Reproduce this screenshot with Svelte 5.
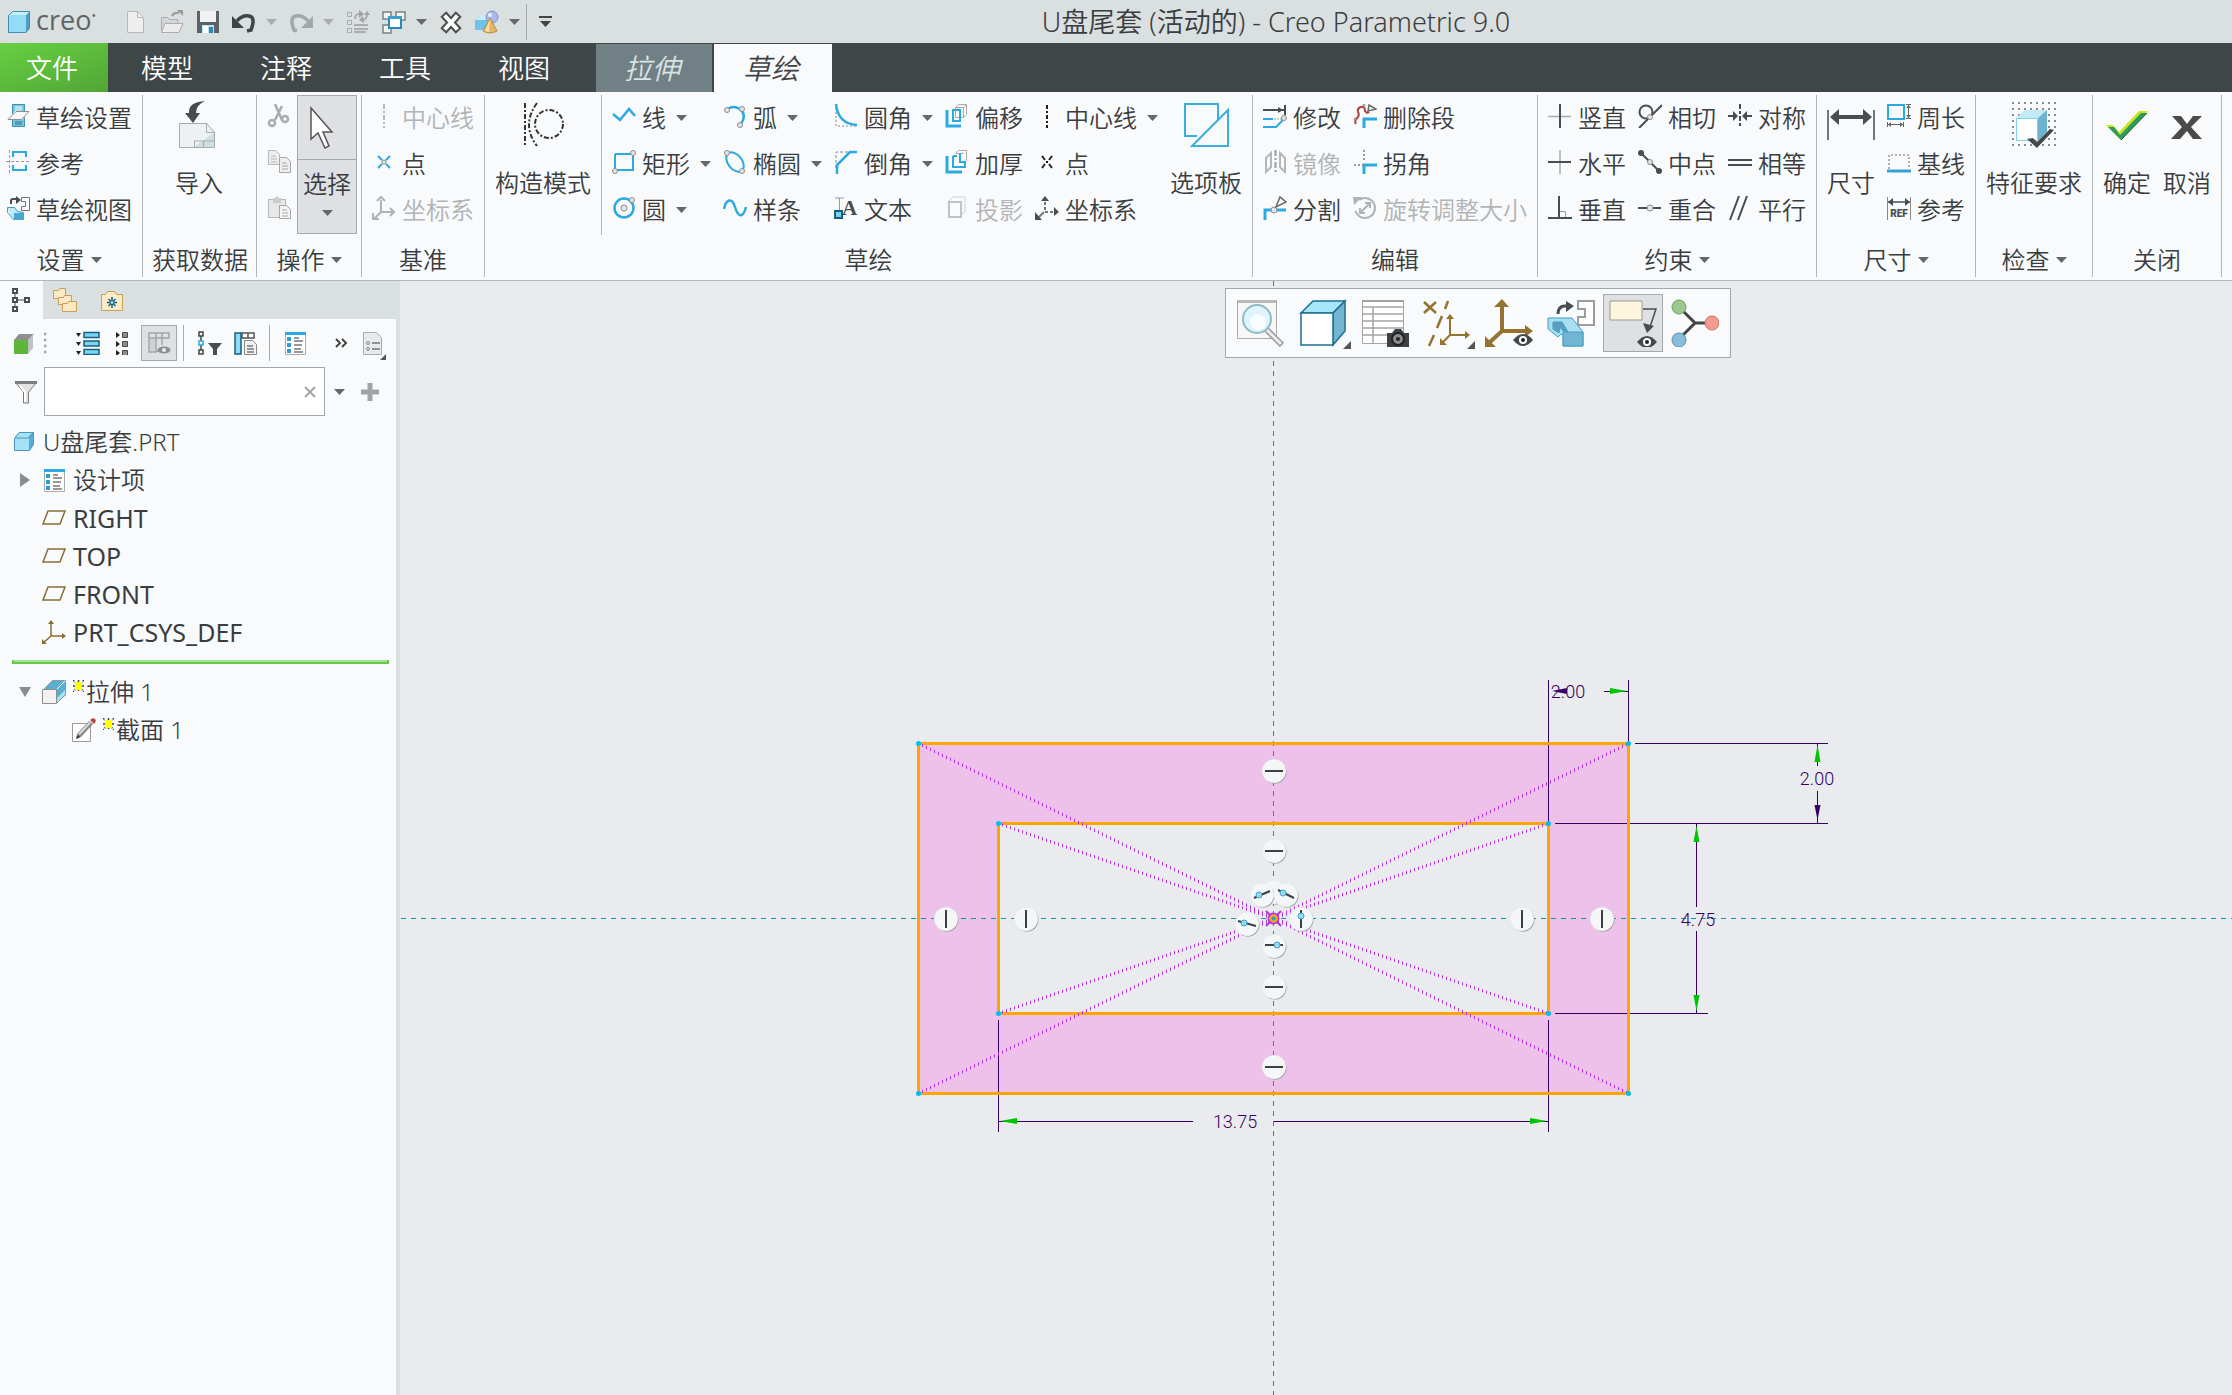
<script lang="ts">
  type Item = { t: string; i: string; menu?: boolean; off?: boolean };
  type Part =
    | { kind: 'col'; items: Item[] }
    | { kind: 'big'; t: string; i: string }
    | { kind: 'clip' }
    | { kind: 'select' }
    | { kind: 'sep' };
  type Group = { label: string; menu?: boolean; cls?: string; parts: Part[] };

  const B = '#2ba9e1';
  const D = '#4a4d4f';
  const G = '#b4b6b7';
  const BR = '#94722f';
  const ball = (x: number, y: number, r = 2.5) =>
    `<circle cx="${x}" cy="${y}" r="${r}" fill="#e4e4e4" stroke="#8d8d8d"/>`;
  const s = (c: string, w: number, d: string, extra = '') =>
    `<path d="${d}" fill="none" stroke="${c}" stroke-width="${w}" ${extra}/>`;
  const f = (c: string, d: string, extra = '') => `<path d="${d}" fill="${c}" ${extra}/>`;

  const small: Record<string, string> = {
    sketchSetup:
      f('#7cc3dc', 'M6 0h13v23H6z') + s('#3f8fae', 1, 'M6.500 .500h12v22h-12z') + f('#b9e2ef', 'M9 2h7v5H9z') +
      f('#4a9cbe', 'M9 17h7v4H9z') + f('#f7f7f7', 'M9 7h15l-8 9H1z') + s('#8b8d8e', 1, 'M10 7.500h13l-7.500 8H2z'),
    refs: s(B, 2, 'M7 7V2h13v5M7 15v5h13v-5') + s('#999', 1, 'M3.500 0v24M0 11.500h23', 'stroke-dasharray="3 2"'),
    sketchView:
      s(D, 2, 'M5 8V5q0-2 2-2h4') + f(D, 'M10 0l5 4-5 4z') + s('#777', 1, 'M15.500 1.500h8v13h-8v-4h4v-5h-4z') +
      f('#bfe9f6', 'M1 11h8l3 4 6 1v8H7z') + s('#3f9cc4', 1, 'M1.500 11.500h7l3 4 6 1v7H7.500l-6-7z') + f('#4aa7cd', 'M8 17h10v7H8z'),
    cut: s('#a9abac', 2.500, 'M8 0l7 16M15 2L8 16') + `<circle cx="5" cy="19" r="3" fill="none" stroke="#a9abac" stroke-width="2.500"/><circle cx="18" cy="15" r="3" fill="none" stroke="#a9abac" stroke-width="2.500"/>`,
    copy: f('#eee', 'M1 0h8l4 4v11H1z') + s(G, 1, 'M1.500 .500h7l4 4v10h-11zM4 6h5M4 9h6M4 12h6') + f('#eee', 'M12 7h8l4 4v12H12z') + s('#a5a7a8', 1, 'M12.500 7.500h7l4 4v11h-11zM15 13h5M15 16h6M15 19h6'),
    paste: f('#e8e8e8', 'M1 3h18v19H1z') + s(G, 1, 'M1.500 3.500h17v18h-17z') + f('#c9cbcc', 'M6 2h2l2-2 2 2h2v5H6z') + f('#f4f4f4', 'M12 9h8l4 4v10H12z') + s('#a5a7a8', 1, 'M12.500 9.500h7l4 4v9h-11zM15 14h5M15 17h6M15 20h6'),
    clOff: s('#b8babb', 2, 'M12 0v24', 'stroke-dasharray="5 2 2 2"'),
    cl: s('#222', 2, 'M12 1v24', 'stroke-dasharray="4 2 2 2"'),
    ptBlue: s(B, 2, 'M6 6l4 4M18 6l-4 4M6 18l4-4M18 18l-4-4') + ball(12, 12, 2),
    ptBlack: s('#222', 2, 'M7 6l3 4M17 6l-3 4M7 18l3-4M17 18l-3-4') + f('#111', 'M11 11h2v2h-2z'),
    csysOff: s('#b0b2b3', 2, 'M9 4v12h12M9 16l-7 7') + s('#b0b2b3', 2, 'M5 5l4-4 4 4M18 12l4 4-4 4M1 17v6h6'),
    csys: s('#777', 2, 'M10 6v10h8', 'stroke-dasharray="3 2"') + s('#777', 2, 'M9 16l-5 5') + f(D, 'M6 5l4-5 4 5zM19 11v9l5-4zM0 16v8h7z'),
    line: s(B, 2.5, 'M1 10l7 6 9-11 6 7'),
    rect: s(B, 2, 'M3 4v16h18V4H3') + ball(21, 3) + ball(3, 21),
    circle: `<circle cx="12" cy="12" r="9.500" fill="none" stroke="${B}" stroke-width="2.500"/>` + ball(12, 12, 3) + ball(20, 4),
    arc: s(B, 2.5, 'M5 5Q10 1 17 5Q24 11 18 20') + ball(4, 6) + ball(19, 5) + ball(17, 21),
    ellipse: `<ellipse cx="12" cy="12" rx="11" ry="7" transform="rotate(52 12 12)" fill="none" stroke="${B}" stroke-width="2"/>` + ball(4, 3) + ball(19, 21),
    spline: s(B, 2.5, 'M1 13C3 3 9 1 12 11S20 23 23 11'),
    fillet: s('#888', 1, 'M2 4v18h20', 'stroke-dasharray="2 2"') + s(B, 2.5, 'M2 0Q4 20 23 21'),
    chamfer: s('#888', 1, 'M2 18V2h14', 'stroke-dasharray="3 2"') + s(B, 2.5, 'M3 24V15L16 2h7'),
    text: s('#999', 1, 'M1 2h9M5.500 2v12') + f('#14607f', 'M0 14h9v9H0z') + f('#7fd0ee', 'M2 16h5v5H2z') + `<text x="8" y="19" font-family="Liberation Serif, serif" font-weight="700" font-size="21" fill="${D}">A</text>`,
    offset: s('#aaa', 1, 'M10.500 3.500l3-3h8v10l-3 3h-8zM10.500 3.500h8v10M18.500 3.500l3-3') + s(B, 2, 'M8 6h7v11H8z') + s(B, 3, 'M2 6v16h14'),
    thicken: s('#aaa', 1, 'M10.500 3.500l3-3h8v10l-3 3M10.500 3.500h8') + s(B, 2, 'M8 6v11h12v-5h-5V3M8 6h4') + s(B, 3, 'M2 6v16h15'),
    project: s('#c0c2c3', 2, 'M4 6h12v15H4z') + s('#cdcfd0', 1, 'M4 5l4-4h12v14l-4 5'),
    modify: s(D, 2, 'M0 6h22M22 1v10') + f(D, 'M15 3l5 3-5 3z') + s(B, 2, 'M0 15h10M0 23h13l7-7') + s('#999', 1, 'M11 15h9', 'stroke-dasharray="2 1"') + ball(21, 14),
    mirror: s('#b4b6b7', 2, 'M3 8l5-5v14l-5 5zM22 8l-5-5v14l5 5z') + s('#999', 2, 'M12.500 0v24', 'stroke-dasharray="6 2 2 2"'),
    split: s(B, 3, 'M2 24V14h8M12 14h11') + ball(11, 14, 3) + s('#666', 1.5, 'M13 11l4-10 6 5z'),
    delSeg: s('#b0413f', 2, 'M3 20q-2-3 1-6t1-6q-1-4 3-5t4 4q2 3 4 1') + s('#666', 1.5, 'M15 7l1-6 7 4z') + s(B, 3, 'M24 15H11v9') + ball(2, 15, 1) + ball(11, 1, 1),
    corner: s(B, 3, 'M24 15H11v9') + s('#999', 2, 'M11 0v12M1 15h9', 'stroke-dasharray="2 2"'),
    rotate: `<circle cx="12" cy="12" r="10" fill="none" stroke="#b0b2b3" stroke-width="2" stroke-dasharray="50 13" transform="rotate(-125 12 12)"/>` + s('#b0b2b3', 2, 'M7 17L17 7M12 7h5v5M7 12v5h5') + f('#b0b2b3', 'M0 1h9l-8 8z'),
    vert: s('#aaa', 1.5, 'M0 12.500h23') + s(D, 2, 'M12 0v24'),
    horiz: s('#aaa', 1.500, 'M12 0v24') + s(D, 2, 'M0 12h23'),
    perp: s(D, 2, 'M11 0v22M0 22h24') + s('#999', 1, 'M12 15.500h5.500V21'),
    tangent: `<circle cx="8" cy="8" r="6.500" fill="none" stroke="${D}" stroke-width="2"/>` + s(D, 2, 'M1 24L24 1') + ball(12, 13, 2.5),
    midpoint: s(D, 2, 'M3 3l18 18') + `<circle cx="3" cy="3" r="3" fill="${D}"/><circle cx="21" cy="21" r="3" fill="${D}"/>` + ball(12, 12),
    coincident: s(D, 2, 'M0 12h23') + ball(12, 12, 3),
    symmetric: s(D, 2, 'M12 0v24', 'stroke-dasharray="5 2 3 2"') + s(D, 2, 'M0 12h7M24 12h-7') + f(D, 'M5 7l5 5-5 5zM19 7l-5 5 5 5z'),
    equal: s(D, 2, 'M0 10h24M0 15h24'),
    parallel: s(D, 2, 'M2 24L11 0M10 24L19 0'),
    perimeter: s(B, 2, 'M1 1h16v14H1z') + s('#666', 1, 'M19 .500h5M19 14.500h5M21.500 1v13M.500 18v5M16.500 18v5M1 20.500h15') + f('#666', 'M19 4l2.500-3L24 4zM19 11l2.500 3 2.500-3zM4 18l-3 2.500L4 23zM13 18l3 2.500-3 2.500z'),
    baseline: s('#999', 1.500, 'M2 19V5h20v14', 'stroke-dasharray="2 2"') + s('#3aa2d2', 3, 'M0 21h24'),
    refdim: s('#888', 1, 'M.500 1v23M23.500 1v23') + s(D, 1.500, 'M1 6h22') + f(D, 'M6 2L1 6l5 4zM18 2l5 4-5 4z') + `<text x="12" y="21" text-anchor="middle" font-family="Roboto, sans-serif" font-weight="900" font-size="10" fill="${D}">REF</text>`,
    new: f('#eee', 'M3 1h11l6 6v16H3z') + s('#b5b7b8', 1, 'M3.500 1.500h10l6 6v15h-16zM13.500 1.500v6h6'),
    open: f('#d4d6d7', 'M1 7h7l2 2h10v13H1z') + f('#ebebeb', 'M5 13h18l-4 9H1z') + s('#aaacad', 1, 'M1.500 21V7.500h6l2 2h8V13M5 13.500h18l-4 9H1.500z') + s('#999', 2, 'M12 6q2-4 7-3') + f('#999', 'M17 0h6v6z'),
    save: f('#5a6468', 'M1 1h22v22H1z') + f('#f2f2f2', 'M4 1h16v11H4z') + f('#bde3f2', 'M6 15h12v8H6z') + f('#fff', 'M7 16h5v7H7z') + f('#2f89b5', 'M13 17h4v6h-4z'),
    undo: s('#3f4547', 3.5, 'M5 11Q10 5 17 6T19 20L15 21') + f('#3f4547', 'M0 6v12h12z'),
    redo: s('#a3a8a9', 3.500, 'M19 11Q14 5 7 6T5 20l3 1') + f('#a3a8a9', 'M24 6v12H12z'),
    regen: s('#aaadae', 1, 'M1.500 2.500h4v4h-4zM1.500 10.500h4v4h-4zM1.500 18.500h4v4h-4z') + s('#aaadae', 2, 'M8 15h14M8 19h14M8 22h12M9 9Q9 4 13 4M21 4q0 6-5 6') + f('#9fa2a3', 'M13 0l5 4-5 4zM17 6l-4 4 5 3zM18 5l3-4 3 4z'),
    windows: `<g fill="#f2f4f4" stroke="#7b8081" stroke-width="1.500"><path d="M1 2h8v7H1zM14 2h9v8h-9zM1 15h8v8H1z"/></g>` + `<path d="M7 7h12v11H7z" fill="#fff" stroke="#2b87b5" stroke-width="2"/>` + f('#3ba0cc', 'M6 6h14v3H6z'),
    close: s('#4d4f50', 8, 'M7 7l10 11M17 7L7 18', 'stroke-linecap="square"') + s('#fff', 4, 'M7 7l10 11M17 7L7 18', 'stroke-linecap="square"'),
    shapes: f('#6cc5e8', 'M0 10l5-4h10v10l-3 4H0z') + f('#c9ecf8', 'M0 10l5-4h10l-3 4z') + `<circle cx="17" cy="7" r="6" fill="#a9b9ea" stroke="#7f90cd"/><circle cx="15" cy="5" r="2" fill="#e6ecff"/>` + `<path d="M15 8l7 13q-7 4-14 0z" fill="#e2b865" stroke="#b58a3a"/>` + f('#f6dfae', 'M15 9l-1 13-4-1z'),
    tree: s(D, 2, 'M2 1h4v4H2zM2 10h4v4H2zM2 19h4v4H2zM14 10h4v4h-4z') + s(D, 1, 'M4 6v3M4 15v3M7 12h6'),
    folders: `<g fill="#fbe9c4" stroke="#c79f55"><path d="M.500 2.500h5l1-2h6v10h-12z"/><path d="M5.500 9.500h5l1-2h7v9h-13z"/><path d="M9.500 15.500h5l1-2h8v10h-14z"/></g>`,
    favorites: `<path d="M1.500 6.500h4l2-3h7l2 3h6v16h-21z" fill="#fdebc6" stroke="#c79f55"/>` + s('#14607f', 1.500, 'M12 9v11M7 14.500h10M8.500 11l7 7M15.500 11l-7 7') + `<circle cx="12" cy="14.500" r="2" fill="#9bdcf5" stroke="#14607f"/>`,
    green: f('#8d8f90', 'M1 9l5-6h15l-5 6z') + f('#bfc1c2', 'M15 9l5-6v14l-5 6z') + f('#5cb739', 'M1 9h14v14H1z'),
    expand: f('#222', 'M0 2h5l-2.500 4zM0 11h5l-2.500 4zM0 20h5l-2.500 4z') + `<g fill="#7dd5f5" stroke="#14607f" stroke-width="1.500"><path d="M8 1.500h15v5H8zM8 10h15v5H8zM8 18.500h15v5H8z"/></g>`,
    collapse: f('#222', 'M4 1l4 3-4 3zM4 10l4 3-4 3zM4 19l4 3-4 3z') + `<g fill="#8a8c8d" stroke="#4a4a4a"><path d="M10.500 1.500h5v5h-5zM10.500 10.500h5v5h-5zM10.500 19.500h5v5h-5z"/></g>`,
    columns: s('#a2a4a5', 1.500, 'M2 2h20v5H2zM2 7v14h7V7M9 2v5M15 2v12M9 20h3') + f('#cfd0d1', 'M3 8h5v12H3z') + `<ellipse cx="17" cy="19" rx="6.500" ry="3.500" fill="#8c8e8f"/><circle cx="17" cy="19" r="2" fill="#eee"/>`,
    treeFilter: s('#444', 1.500, 'M1 1h4v4H1zM1 19h4v4H1zM3 5v14') + `<path d="M1 10h4v4H1z" fill="#fff" stroke="${B}" stroke-width="1.500"/>` + f('#4a4d4f', 'M10 12h14l-5 6v6h-4v-6z'),
    treeCols: f('#fff', 'M1 1h20v6H1z') + s('#555', 1.500, 'M8 2h12v5H8zM14 2v5') + `<path d="M1 2h6v21H1z" fill="#8fdcf7" stroke="#14607f" stroke-width="1.500"/>` + `<path d="M10.500 9.500h8l4 4v10h-12z" fill="#f3f3f3" stroke="#888"/>` + s('#777', 1.500, 'M13 15h6M13 18h7M13 21h7'),
    list: `<path d="M2.500 1.500h20v22h-20z" fill="#fff" stroke="#a9abac"/>` + f(B, 'M2 1h21v3H2z') + s('#2ba0d0', 2, 'M5 7h2v2H5zM5 13h2v2H5zM5 19h2v2H5z') + s('#777', 1.500, 'M11 7h5M11 10h9M11 14h8M11 18h7M11 21h9'),
    doc: `<path d="M1.500 1.500h13l5 5v17h-18z" fill="#e6eaed" stroke="#a9abac"/>` + s('#777', 1.500, 'M10 12h8M10 18h8') + `<circle cx="6" cy="12" r="1.500" fill="none" stroke="#888"/><circle cx="6" cy="18" r="1.500" fill="none" stroke="#888"/>`,
    funnel: `<path d="M1 2h22l-8.500 10v11h-5V12z" fill="#e3e3e3" stroke="#77797a"/>` + f('#7c7e7f', 'M1 1h22v3H1z') + s('#fff', 2, 'M6 6l5 6v10'),
    part: f('#a6e2f7', 'M3 6l4-4h14v13l-4 6H3z') + f('#5aaed2', 'M17 6l4-4v13l-4 6z') + s('#4a96b8', 1, 'M2.500 8.500l5-6h14v12l-4 6h-15zM2.500 8h14l5-5.500'),
    plane: s('#8a6d33', 1.500, 'M6 5h17l-5 13H1z'),
    csysTree: s('#8a6d33', 1.500, 'M9 2v14h14M9 16l-8 7') + f('#8a6d33', 'M6 4l3-4 3 4zM20 13v6l4-3zM0 19v5h5z'),
    extrude: f('#5aaed2', 'M1 10l9-9h14v14l-9 8z') + f('#a6e2f7', 'M15 18l8-8v5l-8 8z') + s('#8b9ba3', 1, 'M1.500 9.500l9-9h13v14l-8.500 8.500') + `<path d="M.500 9.500h14v14H.500z" fill="#f2f2f2" stroke="#8d8f90"/>` + s('#fff', 1, 'M15 9l8-8'),
    section: `<path d="M.500 5.500h18v18H.500z" fill="#fff" stroke="#999"/>` + f('#888', 'M17 3l4 3L9 19l-5 2 1-5z') + f('#d9d9d9', 'M17 4l2 1L8 17l-2-1z') + f('#333', 'M6 17l2 2-4 2z') + f('#b34a4a', 'M18 2q3-3 5-1t-1 5z'),
  };

  const eye = (x: number, y: number) =>
    f('#45494b', `M${x - 10} ${y}q10-12 20 0q-10 12-20 0z`) + `<circle cx="${x}" cy="${y}" r="4" fill="#fff"/><circle cx="${x}" cy="${y}" r="2" fill="#222"/>`;

  const large: Record<string, string> = {
    import: f('#eef1f3', 'M4 22h28l8 9v16H4z') + f('#cfdde5', 'M19 46L40 31v15z') + s('#a9abac', 1, 'M4.500 22.500h27l8 9v15h-35zM31.500 22.500v9h8') + s('#a9abac', 1, 'M19.500 46v-6h20M28.500 40v6') + f('#474b4d', 'M30 0Q13 1 14 12h-4l8 10 7-10h-4Q21 4 30 0z'),
    construct: s('#333', 2, 'M6 2v44', 'stroke-dasharray="5 2 2 2"') + s('#333', 2, 'M18 2Q2 24 18 45', 'stroke-dasharray="5 2 2 2"') + `<circle cx="30" cy="23" r="14" fill="none" stroke="#333" stroke-width="2" stroke-dasharray="5 2 2 2"/>`,
    palette: s('#3aaee0', 2, 'M46 9v36H10zM15 35H3V3h33v16'),
    dim: s(D, 1.500, 'M1 9v30M47 9v30') + s(D, 4, 'M10 16h28') + f(D, 'M3 16l9-8v16zM45 16l-9-8v16z'),
    feature: `<g stroke="#8a8c8d" stroke-width="2" stroke-dasharray="2 4"><path d="M2 2h44M2 8h44M2 14h44M2 20h44M2 26h44M2 32h44M2 38h44M2 44h44"/></g>` + f('#c3ebf7', 'M6 17l9-8h22l-9 8z') + f('#6cb3d0', 'M28 17l9-8v22l-9 9z') + `<path d="M6.500 17.500h21v22h-21z" fill="#fff" stroke="#7ed0ee"/>` + f('#45494b', 'M17 38l6-1 4 4 13-13 4 1-17 18z'),
    ok: f('#c9e61c', 'M3 24h7l6 7L36 10h9L18 39z') + f('#2f9a5e', 'M5 26h6l6 8L38 12h6L18 39z') + s('#1f5f38', 1, 'M44 12L18 39'),
    cancel: f('#4a4a4a', 'M9 15h9l6 8 6-8h9L28 26l11 12h-9l-6-8-7 8H8l11-12z'),
    pointer: f('#fff', 'M7 4v31l7-6 7 15 4-2-6-14h9z') + s('#555', 1.500, 'M7 4v31l7-6 7 15 4-2-6-14h9z'),
    zoomfit: `<path d="M.500 1.500h39v38h-39z" fill="#f7f7f7" stroke="#aaa"/>` + f('#b8baba', 'M1 1h38v3H1z') + s('#9a9c9d', 6, 'M28 29l17 17') + s('#eee', 3, 'M28 29l16 16') + `<circle cx="20" cy="20" r="14" fill="#dff4fc" stroke="#8fb9c9" stroke-width="2"/><circle cx="21" cy="23" r="8" fill="#f8feff"/>`,
    cube: `<g stroke="#1f6f90" stroke-width="1.500"><path d="M2 14L14 2h32L34 14z" fill="#a5e6fa"/><path d="M34 14L46 2v30L34 46z" fill="#72b5d2"/><path d="M2 14h32v32H2z" fill="#fff"/></g>`,
    table: `<path d="M1.500 1.500h41v43h-41z" fill="#fff" stroke="#a2a4a5"/>` + f('#a2a4a5', 'M1 1h42v2H1z') + s('#a2a4a5', 1.500, 'M1 8h42M1 15h42M1 22h42M1 29h42M1 36h42M12 8v36') + f('#3f4244', 'M26 34h5l3-4h6l3 4h5v14H26z') + `<circle cx="37" cy="40" r="6" fill="#8a8c8d" stroke="#222" stroke-width="2"/><circle cx="37" cy="40" r="2" fill="#222"/>`,
    datum: s(BR, 2.500, 'M1 3l12 11M13 3L1 14M25 2l-3 8M19 17l-5 12M11 36L6 47') + s(BR, 2, 'M27 20v16h16M27 36l-8 8') + f(BR, 'M23 20l4-5 4 5zM42 32v8l5-4zM17 39v7h7z'),
    csysView: s(BR, 4, 'M17 6v26h26M17 32L5 43') + f(BR, 'M9 8l8-8 7 8zM40 26v12l8-6zM0 37v11h11z') + eye(38, 41),
    orient: s(D, 3, 'M11 15q0-8 7-8h2') + f(D, 'M19 2l8 5-8 6z') + `<path d="M31 2h16v24H31v-8h7v-8h-7z" fill="#fff" stroke="#9a9c9d" stroke-width="2"/>` + `<g stroke="#3fa0c9"><path d="M1 19h24l11 14v14H16V36l-2-1-3 3-10-8z" fill="#a9def0"/><path d="M16 33h20v14H16z" fill="#72b5d2"/><path d="M6 23h9l6 10-5-1-3-4-1 6-6-4z" fill="#5a9fbd"/></g>`,
    annot: `<path d="M1 2h32v19H1z" fill="#fdf6dc" stroke="#999"/>` + s(D, 1.500, 'M34 10h13l-6 18') + f(D, 'M34 24l11 3-7 7z') + eye(38, 43),
    nodes: s('#444', 3, 'M8 8l16 16L8 40M24 24h14') + `<circle cx="8" cy="8" r="7" fill="#9cc98b" stroke="#6f9f61"/><circle cx="8" cy="41" r="7" fill="#89bcd8" stroke="#5d93b1"/><circle cx="41" cy="24" r="7" fill="#f59a90" stroke="#d17066"/>`,
  };

  const col = (...items: Item[]): Part => ({ kind: 'col', items });
  const groups: Group[] = [
    { label: '设置', menu: true, cls: 'first', parts: [col({ t: '草绘设置', i: 'sketchSetup' }, { t: '参考', i: 'refs' }, { t: '草绘视图', i: 'sketchView' })] },
    { label: '获取数据', cls: 'data', parts: [{ kind: 'big', t: '导入', i: 'import' }] },
    { label: '操作', menu: true, cls: 'ops', parts: [{ kind: 'clip' }, { kind: 'select' }] },
    { label: '基准', parts: [col({ t: '中心线', i: 'clOff', off: true }, { t: '点', i: 'ptBlue' }, { t: '坐标系', i: 'csysOff', off: true })] },
    {
      label: '草绘',
      parts: [
        { kind: 'big', t: '构造模式', i: 'construct' },
        { kind: 'sep' },
        col({ t: '线', i: 'line', menu: true }, { t: '矩形', i: 'rect', menu: true }, { t: '圆', i: 'circle', menu: true }),
        col({ t: '弧', i: 'arc', menu: true }, { t: '椭圆', i: 'ellipse', menu: true }, { t: '样条', i: 'spline' }),
        col({ t: '圆角', i: 'fillet', menu: true }, { t: '倒角', i: 'chamfer', menu: true }, { t: '文本', i: 'text' }),
        col({ t: '偏移', i: 'offset' }, { t: '加厚', i: 'thicken' }, { t: '投影', i: 'project', off: true }),
        col({ t: '中心线', i: 'cl', menu: true }, { t: '点', i: 'ptBlack' }, { t: '坐标系', i: 'csys' }),
        { kind: 'big', t: '选项板', i: 'palette' },
      ],
    },
    {
      label: '编辑',
      parts: [
        col({ t: '修改', i: 'modify' }, { t: '镜像', i: 'mirror', off: true }, { t: '分割', i: 'split' }),
        col({ t: '删除段', i: 'delSeg' }, { t: '拐角', i: 'corner' }, { t: '旋转调整大小', i: 'rotate', off: true }),
      ],
    },
    {
      label: '约束', menu: true,
      parts: [
        col({ t: '竖直', i: 'vert' }, { t: '水平', i: 'horiz' }, { t: '垂直', i: 'perp' }),
        col({ t: '相切', i: 'tangent' }, { t: '中点', i: 'midpoint' }, { t: '重合', i: 'coincident' }),
        col({ t: '对称', i: 'symmetric' }, { t: '相等', i: 'equal' }, { t: '平行', i: 'parallel' }),
      ],
    },
    {
      label: '尺寸', menu: true,
      parts: [{ kind: 'big', t: '尺寸', i: 'dim' }, col({ t: '周长', i: 'perimeter' }, { t: '基线', i: 'baseline' }, { t: '参考', i: 'refdim' })],
    },
    { label: '检查', menu: true, parts: [{ kind: 'big', t: '特征要求', i: 'feature' }] },
    { label: '关闭', parts: [{ kind: 'big', t: '确定', i: 'ok' }, { kind: 'big', t: '取消', i: 'cancel' }] },
  ];

  const viewTools = [
    { i: 'zoomfit', t: '重新调整' },
    { i: 'cube', t: '显示样式', more: true },
    { i: 'table', t: '视图管理器' },
    { i: 'datum', t: '基准显示过滤器', more: true },
    { i: 'csysView', t: '坐标系显示' },
    { i: 'orient', t: '草绘视图' },
    { i: 'annot', t: '注释显示', on: true },
    { i: 'nodes', t: '旋转中心' },
  ];

  const C = { x: 1273.5, y: 918.5 };
  const corners = [
    [918.5, 743.5], [1628.5, 743.5], [1628.5, 1093.5], [918.5, 1093.5],
    [998.5, 823.5], [1548.5, 823.5], [1548.5, 1013.5], [998.5, 1013.5],
  ];
  const badges = [
    { x: 1274, y: 771, l: [-9, 0, 9, 0] },
    { x: 1274, y: 851, l: [-9, 0, 9, 0] },
    { x: 1274, y: 987, l: [-9, 0, 9, 0] },
    { x: 1274, y: 1067, l: [-9, 0, 9, 0] },
    { x: 946, y: 919, l: [0, -9, 0, 9] },
    { x: 1026, y: 919, l: [0, -9, 0, 9] },
    { x: 1522, y: 919, l: [0, -9, 0, 9] },
    { x: 1602, y: 919, l: [0, -9, 0, 9] },
    { x: 1274, y: 892, l: [2, -1, 6, -6] },
    { x: 1262, y: 895, l: [-8, 3, 8, -4], p: [-3, 0] },
    { x: 1286, y: 895, l: [-8, -5, 8, 3], p: [-3, -2] },
    { x: 1247, y: 924, l: [-9, -3, 9, 2], p: [-3, -1] },
    { x: 1301, y: 919, l: [0, -9, 0, 9], p: [0, -3] },
    { x: 1274, y: 946, l: [-9, -1, 9, -1], p: [3, -1] },
  ];
</script>

{#snippet ic(name: string)}
  <svg class="ic" viewBox="0 0 24 24" aria-hidden="true">{@html small[name]}</svg>
{/snippet}
{#snippet lg(name: string)}
  <svg class="lg" viewBox="0 0 48 48" aria-hidden="true">{@html large[name]}</svg>
{/snippet}
{#snippet caret()}
  <svg class="caret" viewBox="0 0 11 6" aria-hidden="true"><path d="M0 0h11L5.500 6z" fill="currentColor" /></svg>
{/snippet}
{#snippet star()}
  <svg class="star" viewBox="0 0 11 12" aria-hidden="true">
    <path d="M0 0l11 12M11 0L0 12M5.500 0v12M0 6h11" stroke="#444" stroke-width="1.500" stroke-dasharray="2 1" />
    <path d="M2 2h7v8H2z" fill="#ff0" />
  </svg>
{/snippet}

<div class="app">
  <header class="title">
    <div class="brand">
      <svg class="ic" viewBox="0 0 24 24" aria-hidden="true">
        <path d="M1 5l4-4h18v17l-4 5H1z" fill="#93dcf5" /><path d="M19 5l4-4v17l-4 5z" fill="#4d9fc4" />
        <path d="M1 5l4-4h18l-4 4z" fill="#c9f1fd" /><path d="M1.500 5.500l4-4h17v16.500l-4 4.500h-17z" fill="none" stroke="#3f8fb3" />
      </svg>
      <span>creo<sup>•</sup></span>
    </div>
    <nav class="quick" aria-label="快速访问">
      <button aria-label="新建">{@render ic('new')}</button>
      <button aria-label="打开">{@render ic('open')}</button>
      <button aria-label="保存">{@render ic('save')}</button>
      <button aria-label="撤销">{@render ic('undo')}<span class="pale">{@render caret()}</span></button>
      <button aria-label="重做">{@render ic('redo')}<span class="pale">{@render caret()}</span></button>
      <button aria-label="重新生成">{@render ic('regen')}</button>
      <button aria-label="窗口">{@render ic('windows')}{@render caret()}</button>
      <button aria-label="关闭窗口">{@render ic('close')}</button>
      <button aria-label="外观">{@render ic('shapes')}{@render caret()}</button>
      <i class="rule"></i>
      <button aria-label="自定义">
        <svg class="more" viewBox="0 0 13 12" aria-hidden="true"><path d="M0 0h13v2H0zM1 5h11l-5.500 6z" fill="#444" /></svg>
      </button>
    </nav>
    <h1>U盘尾套 (活动的) - Creo Parametric 9.0</h1>
  </header>

  <nav class="tabs" aria-label="选项卡">
    <button class="file">文件</button>
    {#each ['模型', '注释', '工具', '视图'] as t}<button>{t}</button>{/each}
    <button class="context">拉伸</button>
    <button class="active">草绘</button>
  </nav>

  <section class="ribbon">
    {#each groups as g}
      <div class="group {g.cls ?? ''}">
        <div class="body">
          {#each g.parts as p}
            {#if p.kind === 'col'}
              <div class="col">
                {#each p.items as it}
                  <button class="item" disabled={it.off}>
                    {@render ic(it.i)}<span>{it.t}</span>{#if it.menu}{@render caret()}{/if}
                  </button>
                {/each}
              </div>
            {:else if p.kind === 'big'}
              <button class="big">{@render lg(p.i)}<span>{p.t}</span></button>
            {:else if p.kind === 'clip'}
              <div class="col">
                <button class="item" aria-label="剪切" disabled>{@render ic('cut')}</button>
                <button class="item" aria-label="复制" disabled>{@render ic('copy')}</button>
                <button class="item" aria-label="粘贴" disabled>{@render ic('paste')}</button>
              </div>
            {:else if p.kind === 'select'}
              <div class="select">
                <button aria-label="选择工具">{@render lg('pointer')}</button>
                <button><span>选择</span>{@render caret()}</button>
              </div>
            {:else}
              <i class="part"></i>
            {/if}
          {/each}
        </div>
        <div class="label">{g.label}{#if g.menu}{@render caret()}{/if}</div>
      </div>
    {/each}
  </section>

  <main>
    <aside>
      <nav class="ptabs" aria-label="导航器">
        <button class="on" aria-label="模型树">{@render ic('tree')}</button>
        <button aria-label="文件夹浏览器">{@render ic('folders')}</button>
        <button aria-label="收藏夹">{@render ic('favorites')}</button>
      </nav>
      <div class="ptools">
        <button aria-label="模型">{@render ic('green')}</button>
        <i class="grip"></i>
        <button aria-label="全部展开">{@render ic('expand')}</button>
        <button aria-label="全部折叠">{@render ic('collapse')}</button>
        <button class="pressed" aria-label="显示列">{@render ic('columns')}</button>
        <i class="rule"></i>
        <button aria-label="树过滤器">{@render ic('treeFilter')}</button>
        <button aria-label="树列">{@render ic('treeCols')}</button>
        <i class="rule wide"></i>
        <button aria-label="设计项">{@render ic('list')}</button>
        <button class="chev" aria-label="更多">
          <svg viewBox="0 0 13 10" aria-hidden="true"><path d="M1 1l4 4-4 4M7 1l4 4-4 4" fill="none" stroke="#444" stroke-width="2" /></svg>
        </button>
        <button class="has-more" aria-label="设置">{@render ic('doc')}</button>
      </div>
      <div class="search">
        {@render ic('funnel')}
        <div class="field">
          <input type="text" aria-label="搜索模型树" />
          <button aria-label="清除">
            <svg viewBox="0 0 12 12" aria-hidden="true"><path d="M1 1l10 10M11 1L1 11" stroke="#a3a5a6" stroke-width="2" /></svg>
          </button>
        </div>
        <button aria-label="搜索选项">{@render caret()}</button>
        <button aria-label="添加">
          <svg class="plus" viewBox="0 0 18 18" aria-hidden="true"><path d="M9 0v18M0 9h18" stroke="#a0a2a3" stroke-width="5" /></svg>
        </button>
      </div>
      <ul class="tree">
        <li class="l0">{@render ic('part')}<span>U盘尾套.PRT</span></li>
        <li class="l1"><svg class="tw" viewBox="0 0 12 14" aria-hidden="true"><path d="M1 0l10 7L1 14z" fill="#8a8c8d" /></svg>{@render ic('list')}<span>设计项</span></li>
        {#each ['RIGHT', 'TOP', 'FRONT'] as n}
          <li class="l1 latin"><i class="tw"></i>{@render ic('plane')}<span>{n}</span></li>
        {/each}
        <li class="l1 latin"><i class="tw"></i>{@render ic('csysTree')}<span>PRT_CSYS_DEF</span></li>
      </ul>
      <div class="insert"></div>
      <ul class="tree">
        <li class="l1"><svg class="tw" viewBox="0 0 12 14" aria-hidden="true"><path d="M0 2h12L6 12z" fill="#8a8c8d" /></svg>{@render ic('extrude')}<span>{@render star()}拉伸 1</span></li>
        <li class="l2">{@render ic('section')}<span>{@render star()}截面 1</span></li>
      </ul>
    </aside>

    <div class="canvas">
      <svg class="sketch" viewBox="400 281 1832 1114" preserveAspectRatio="xMidYMid slice" role="img" aria-label="草绘截面">
        <defs>
          <pattern id="ticks" patternUnits="userSpaceOnUse" x="2" y="0" width="4" height="4">
            <rect width="1" height="4" fill="#b335dc" />
          </pattern>
        </defs>
        <path d="M918.500 743.500h710v350h-710zM998.500 823.500v190h550v-190z" fill="#eec1ea" fill-rule="evenodd" />
        <g stroke="#009f9d" stroke-dasharray="5 5">
          <path d="M401 918.500H2232M1273.500 281V1395" />
        </g>
        <g stroke="#360060" fill="none">
          <path d="M998.500 1020v112M1548.500 1020v112M999 1121.500h194M1274 1121.500h274" />
          <path d="M1548.500 680v143M1628.500 680v63M1604 691.500h24" />
          <path d="M1635 743.500h193M1555 823.500h273M1817.500 744v22M1817.500 791v32" />
          <path d="M1555 1013.500h153M1696.500 824v83M1696.500 931v82" />
        </g>
        <g fill="#00c400">
          <path d="M1000 1121l17-3v6zM1547 1121l-17-3v6zM1627 691l-17-3v6z" />
          <path d="M1817.500 745l-3 17h6zM1696.500 826l-3 16h6zM1696.500 1011l-3-16h6z" />
        </g>
        <path d="M1552 691l15-3v6zM1817.500 820l-3-15h6z" fill="#360060" />
        <g class="dims">
          <text x="1235" y="1128">13.75</text>
          <text x="1568" y="698">2.00</text>
          <text x="1817" y="785">2.00</text>
          <text x="1698" y="926">4.75</text>
        </g>
        <path d="M918.500 743.500h710v350h-710zM998.500 823.500h550v190h-550z" fill="none" stroke="#ffa500" stroke-width="3" />
        {#each corners as [x, y]}
          <path d="M{C.x} {C.y}L{x} {y}" stroke="url(#ticks)" stroke-width="3" />
          <circle cx={x} cy={y} r="2.500" fill="#00bfef" />
        {/each}
        <path d="M1266 911l15 15M1281 911l-15 15" stroke="#b335dc" stroke-width="2" />
        <circle cx={C.x} cy={C.y} r="5" fill="none" stroke="#b335dc" stroke-width="2" />
        <circle cx={C.x} cy={C.y} r="3" fill="#1f9be0" stroke="#ffa500" stroke-width="2" />
        {#each badges as b}
          <g transform="translate({b.x} {b.y})">
            <circle cx="1" cy="1" r="11.500" fill="#9b9da0" />
            <circle r="12" fill="#e3e5e8" />
            <circle r="11.500" fill="#f4f6f8" />
            <path d="M{b.l[0]} {b.l[1]}L{b.l[2]} {b.l[3]}" stroke="#3e4042" stroke-width="2" />
            {#if b.p}<circle cx={b.p[0]} cy={b.p[1]} r="3" fill="#8ddcf8" stroke="#4b9cc0" />{/if}
          </g>
        {/each}
      </svg>
      <div class="viewbar" role="toolbar" aria-label="图形工具栏">
        {#each viewTools as v}
          <button class:pressed={v.on} class:has-more={v.more} aria-label={v.t}>{@render lg(v.i)}</button>
        {/each}
      </div>
    </div>
  </main>
</div>

<style>
  :global(body) { margin: 0; }
  .app {
    display: flex; flex-direction: column; min-height: 100vh;
    font: 350 24px/24px 'Noto Sans', 'Noto Sans CJK SC', sans-serif;
    color: #3a3d3f; background: #f8fafc; overflow: hidden;
  }
  button { font: inherit; color: inherit; background: none; border: 0; padding: 0; margin: 0; display: flex; align-items: center; }
  svg { flex: none; display: block; }
  .ic { width: 24px; height: 24px; }
  .lg { width: 48px; height: 48px; }
  .caret { width: 11px; height: 6px; color: #646667; margin-left: 10px; }
  .pale .caret { color: #a9adae; }

  .title { display: flex; align-items: center; height: 43px; background: #dadfdf; }
  .brand { display: flex; align-items: center; gap: 5px; width: 117px; padding-left: 7px; color: #5f6567; }
  .brand span { font: 500 27px/28px 'Open Sans', sans-serif; padding-bottom: 4px; }
  .brand sup { font-size: 12px; line-height: 1px; }
  .quick { display: flex; align-items: center; gap: 12px; }
  .quick .rule { width: 1px; height: 36px; background: #a3a9aa; margin-left: -6px; }
  .more { width: 13px; height: 12px; }
  .title h1 { flex: 1; margin: 0; padding-right: 232px; text-align: center; font-size: 27px; font-weight: inherit; line-height: 42px; }

  .tabs { display: flex; height: 49px; background: #3e4647; color: #fff; font-size: 26px; }
  .tabs button { padding: 0 33px; margin-right: 1px; }
  .tabs .file { padding: 0 30px 0 26px; margin: 0; background: linear-gradient(160deg, #66d043, #52a535); }
  .tabs .context { margin: 1px 2px 0 12px; padding: 0 32px 0 28px; background: #708084; color: #dbe4e5; font-style: italic; font-size: 28px; }
  .tabs .active { margin-top: 1px; padding: 0 33px 0 29px; background: #f8fafc; color: #3f4244; font-style: italic; font-size: 28px; }

  .ribbon { display: flex; height: 188px; border-bottom: 1px solid #afb8bb; background: #f8fafc; }
  .group { display: flex; flex-direction: column; margin: 3px 0; padding: 0 10px; border-right: 1px solid #b0b5b7; }
  .group.first { padding-left: 6px; }
  .group.data { padding: 0 8px 0 9px; }
  .group.ops { padding-right: 4px; }
  .body { display: flex; gap: 12px; height: 140px; justify-content: center; }
  .data .body { padding-right: 2px; }
  .ops .body { gap: 6px; }
  .col { display: grid; grid-template-rows: repeat(3, 46px); }
  .item { gap: 6px; white-space: nowrap; }
  .item .caret { margin-left: 4px; }
  .item .ic { margin-bottom: 4px; }
  .item:disabled { color: #b1b3b4; }
  .big { flex-direction: column; gap: 22px; padding-top: 6px; white-space: nowrap; }
  .part { width: 1px; margin: 0 -2px; background: #b0b5b7; }
  .select { display: flex; flex-direction: column; box-sizing: border-box; width: 60px; height: 139px; border: 1px solid #a6a8aa; background: #dfe0e3; }
  .select button { height: 63px; justify-content: center; padding-left: 2px; }
  .select button + button { flex: 1; flex-direction: column; gap: 14px; padding: 0 0 6px; border-top: 1px solid #a6a8aa; }
  .select .caret { margin: 0; }
  .label { display: flex; align-items: center; justify-content: center; height: 34px; padding-top: 8px; white-space: nowrap; }
  .label .caret { margin-left: 6px; }
  .ops .label { padding-right: 6px; }

  main { flex: 1; display: flex; }
  aside { display: flex; flex-direction: column; width: 396px; flex: none; border-right: 4px solid #dadfdf; background: #f8fafc; }
  .ptabs { display: flex; height: 38px; background: #dadfdf; }
  .ptabs button { padding: 0 13px 0 10px; }
  .ptabs .on { padding: 0 8px 0 11px; background: #f8fafc; }
  .ptools { display: flex; align-items: center; height: 48px; padding-left: 13px; }
  .ptools button + button { margin-left: 12px; }
  .ptools .rule { width: 1px; height: 36px; margin: 0 14px 0 6px; background: #a9afb1; }
  .ptools .wide { margin: 0 13px 0 11px; }
  .grip { width: 3px; height: 22px; margin: 0 29px 0 7px; background: radial-gradient(circle at 1px 2px, #aaa 1px, transparent 2px) 0 0 / 3px 6px; }
  .ptools .pressed { margin-left: 5px; }
  .pressed { box-sizing: border-box; justify-content: center; width: 36px; height: 36px; background: #dfe0e3; border: 1px solid #a6a8aa; }
  .ptools .chev { margin-left: 28px; }
  .ptools .chev + button { margin-left: 14px; }
  .chev svg { width: 13px; height: 10px; }
  .has-more { position: relative; }
  .has-more::after { content: ''; position: absolute; right: 0; bottom: -5px; border: 3px solid #555; border-top-color: transparent; border-left-color: transparent; }
  .search { display: flex; align-items: center; height: 49px; padding-left: 14px; }
  .field { display: flex; align-items: center; box-sizing: border-box; width: 281px; height: 49px; margin-left: 6px; border: 1px solid #9fa9ac; background: #fff; }
  .field input { flex: 1; min-width: 0; height: 40px; border: 0; outline: 0; padding: 0 8px; font: inherit; background: none; }
  .field button { padding-right: 8px; }
  .field button svg { width: 12px; height: 12px; }
  .search .caret { margin-left: 9px; }
  .plus { width: 18px; height: 18px; margin-left: 16px; }
  .tree { list-style: none; margin: 0; padding: 7px 0 0; }
  .tree li { display: flex; align-items: center; height: 38px; white-space: nowrap; }
  .tree li span { display: flex; margin-left: 7px; }
  .tree .latin { font-size: 25px; font-weight: 400; }
  .tree .l0 { padding-left: 12px; }
  .tree .l1 { padding-left: 19px; }
  .tree .l2 { padding-left: 72px; }
  .tw { width: 12px; height: 14px; margin-right: 11px; }
  .star { width: 11px; height: 12px; margin-right: 2px; }
  .insert { height: 4px; margin: 9px 7px 4px 12px; background: linear-gradient(#a8e296 50%, #67c94a 50%); border: solid #67c94a; border-width: 0 2px; }
  .insert + .tree { padding-top: 5px; }

  .canvas { position: relative; flex: 1; background: #e9ebee; overflow: hidden; }
  .sketch { position: absolute; inset: 0; width: 100%; height: 100%; }
  .dims { font: 300 18px Roboto, sans-serif; fill: #360060; text-anchor: middle; }
  .viewbar { position: absolute; left: 825px; top: 7px; display: flex; gap: 2px; padding: 5px; border: 1px solid #a3a7a9; background: #f8fafc; }
  .viewbar button { box-sizing: border-box; width: 60px; height: 58px; justify-content: center; }
  .viewbar .has-more::after { right: 2px; bottom: 3px; border-width: 4px; }
</style>
